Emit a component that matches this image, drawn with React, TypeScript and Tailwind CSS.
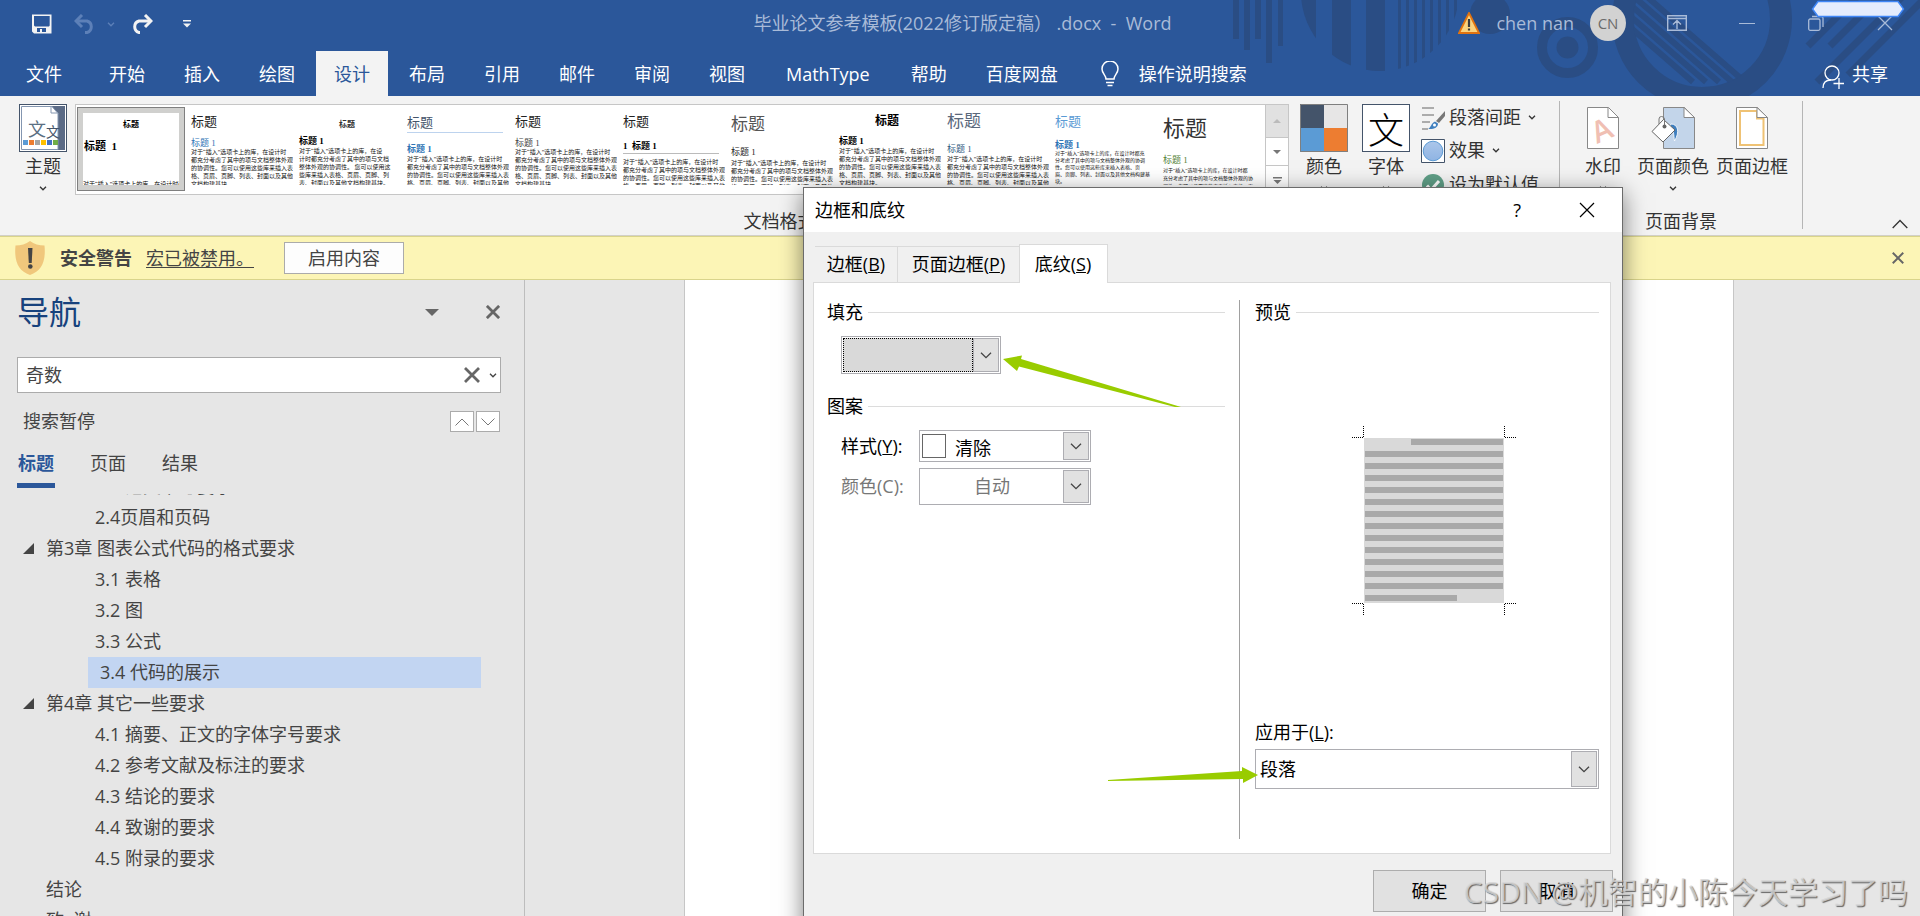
import { useState } from "react";
import type { ReactNode } from "react";

const SANS = "font-['Open_Sans','Noto_Sans_CJK_SC',sans-serif]";
const SERIF = "font-['Liberation_Serif','Noto_Sans_CJK_SC',serif]";

function Chevron({ className = "" }: { className?: string }) {
  return (
    <svg viewBox="0 0 8 5" className={`h-[5px] w-2 ${className}`} fill="none" stroke="currentColor" strokeWidth="1.3">
      <path d="M1 .8 4 3.8 7 .8" />
    </svg>
  );
}

function Cross({ className = "", width = 1.2 }: { className?: string; width?: number }) {
  return (
    <svg viewBox="0 0 16 16" className={className} fill="none" stroke="currentColor" strokeWidth={width}>
      <path d="M1 1 15 15M15 1 1 15" />
    </svg>
  );
}

function TitleDecor() {
  const thin = [1398, 1406, 1414, 1422, 1430, 1438, 1446, 1454];
  return (
    <svg viewBox="1200 0 720 96" className="pointer-events-none absolute top-0 right-0 h-24 w-[720px]" fill="#2a4d84">
      <defs>
        <clipPath id="bigDisc">
          <circle cx="1380" cy="-8" r="79" />
        </clipPath>
        <clipPath id="ringHole">
          <circle cx="1702" cy="19" r="69" />
        </clipPath>
      </defs>
      <rect x="1233" y="0" width="6" height="39" />
      <rect x="1244" y="0" width="6" height="50" />
      <rect x="1255" y="0" width="6" height="39" />
      <rect x="1266" y="0" width="6" height="63" />
      <rect x="1278" y="0" width="5" height="46" />
      <g clipPath="url(#bigDisc)">
        <rect x="1300" y="0" width="16" height="80" />
        <rect x="1332" y="0" width="19" height="80" />
        <rect x="1366" y="0" width="19" height="80" />
        {thin.map((x) => (
          <rect key={x} x={x} y="0" width="3" height="80" />
        ))}
      </g>
      <circle cx="1490" cy="14" r="20" />
      <circle cx="1567.5" cy="47.5" r="25.5" fill="none" stroke="#2a4d84" strokeWidth="10" />
      <circle cx="1567.5" cy="47.5" r="11" />
      <circle cx="1702" cy="19" r="79" fill="none" stroke="#2a4d84" strokeWidth="22" />
      <g clipPath="url(#ringHole)" stroke="#2a4d84" strokeWidth="6">
        <path d="M1645 -5 1745 82M1632 -5 1732 82M1619 -5 1719 82M1606 -5 1706 82M1593 -5 1693 82" />
      </g>
      <path
        d="M1808 46 1858 -4M1830 46 1880 -4M1817 82 1903 -4M1848 75 1925 -2"
        fill="none"
        stroke="#2a4d84"
        strokeWidth="7"
      />
    </svg>
  );
}

function TitleBar() {
  return (
    <div className="relative flex h-[46px] items-center text-[18px] text-[#a9bbd8]">
      <div className="flex flex-1 items-center pt-0.5 pl-8 text-[#f3f3f3]">
        <button aria-label="保存" className="h-5 w-5">
          <svg viewBox="0 0 20 20" className="h-5 w-5" fill="currentColor">
            <path fillRule="evenodd" d="M0 .5h19.5v19H2L0 17.500zM2 2v9.500l1 1h14l.7-1V2zM5 14v4h3v-3h2v3h4v-4z" />
          </svg>
        </button>
        <button aria-label="撤消" className="ml-[22px] text-[#5d80b8]">
          <svg viewBox="0 0 22 20" className="h-5 w-[22px]" fill="none" stroke="currentColor" strokeWidth="3">
            <path d="M2 7h11a6 6 0 0 1 0 11.500h-2" />
            <path d="M8 1 2 7 8 13" />
          </svg>
        </button>
        <Chevron className="ml-[11px] text-[#5d80b8]" />
        <button aria-label="重做" className="ml-4">
          <svg viewBox="0 0 22 20" className="h-5 w-[22px]" fill="none" stroke="currentColor" strokeWidth="3">
            <path d="M20 7H8a6 6 0 0 0 0 11.500h1" />
            <path d="M14 1 20 7 14 13" />
          </svg>
        </button>
        <button aria-label="自定义快速访问工具栏" className="ml-[30px]">
          <svg viewBox="0 0 8 8" className="h-2 w-2" fill="currentColor">
            <path d="M0 0h8v1.500H0zM0 3.500h8L4 7.500z" />
          </svg>
        </button>
      </div>
      <h1 className="whitespace-pre">毕业论文参考模板(2022修订版定稿） .docx  -  Word</h1>
      <div className="flex flex-1 items-center justify-end pr-[27px]">
        <svg viewBox="0 0 22 22" className="h-[22px] w-[22px]">
          <path d="M11 1 21 21H1z" fill="#fbd37d" stroke="#e2730f" strokeWidth="1.800" />
          <path d="M11 7v8M11 16.500v2" stroke="#3c3c3c" strokeWidth="2.200" />
        </svg>
        <span className="ml-4">chen nan</span>
        <span className="ml-4 flex h-9 w-9 items-center justify-center rounded-full bg-[#d2d2d2] text-[15px] text-[#6b6b6b]">
          CN
        </span>
        <button aria-label="功能区显示选项" className="ml-[41px]">
          <svg viewBox="0 0 20 16" className="h-4 w-5" fill="none" stroke="currentColor" strokeWidth="1.400">
            <path d="M.7.700h18.600v14.600H.7zM.7 3.500h18.600M10 14V6M6 9.500l4-4 4 4" />
          </svg>
        </button>
        <button aria-label="最小化" className="ml-[52px] h-4 w-4">
          <span className="block h-px w-4 bg-[#a9bbd8]" />
        </button>
        <button aria-label="还原" className="ml-[53px]">
          <svg viewBox="0 0 16 16" className="h-4 w-4" fill="none" stroke="currentColor" strokeWidth="1.300">
            <rect x=".7" y="4" width="11.300" height="11.300" rx="1.500" />
            <path d="M4 1.500h9.500q1.500 0 1.500 1.500v9" />
          </svg>
        </button>
        <button aria-label="关闭" className="ml-[53px]">
          <Cross className="h-4 w-4" width={1.3} />
        </button>
      </div>
      <svg viewBox="0 0 94 18" className="absolute top-0 right-[15px] h-[18px] w-[94px]">
        <path d="M7 1.500h80L92.500 9 87 16.500H7L1.500 9z" fill="#e4ecfd" stroke="#3f86f7" strokeWidth="1.500" />
      </svg>
    </div>
  );
}

const tabs = ["开始", "插入", "绘图", "设计", "布局", "引用", "邮件", "审阅", "视图", "MathType", "帮助", "百度网盘"];

function tabClass(name: string) {
  if (name === "设计") return "bg-[#f3f3f3] px-[18px] text-[#2b579a]";
  if (name === "MathType") return "px-5";
  return "px-[18px]";
}

function RibbonTabs() {
  return (
    <div className="relative mt-[5px] flex h-[45px] text-[18px] leading-[44px] text-white">
      <button className="ml-2 px-[18px]">文件</button>
      <nav className="ml-[11px] flex gap-[3px]">
        {tabs.map((t) => (
          <button key={t} className={tabClass(t)}>
            {t}
          </button>
        ))}
      </nav>
      <button className="ml-[25px] flex items-center gap-5">
        <svg viewBox="0 0 18 26" className="h-[26px] w-[18px]" fill="none" stroke="currentColor" strokeWidth="1.500">
          <path d="M5 18c0-4-4-5.500-4-10a8 8 0 0 1 16 0c0 4.500-4 6-4 10zM5 21.500h8M6.500 24.500h5" />
        </svg>
        操作说明搜索
      </button>
      <button className="ml-auto flex items-center gap-2 pr-8">
        <svg viewBox="0 0 22 26" className="mt-1.5 h-[26px] w-[22px]" fill="none" stroke="currentColor" strokeWidth="1.300">
          <circle cx="10" cy="9" r="7" />
          <path d="M1 24c0-5 3-8 8-8M17 14v11M11.500 19.500h10.500" />
        </svg>
        共享
      </button>
    </div>
  );
}

const bodyLines = [
  "对于“插入”选项卡上的库，在设计时",
  "都充分考虑了其中的项与文档整体外观",
  "的协调性。您可以使用这些库来插入表",
  "格、页眉、页脚、列表、封面以及其他",
  "文档构建基块。",
];
const wideLines = [
  "对于“插入”选项卡上的库，在设",
  "计时都充分考虑了其中的项与文档",
  "整体外观的协调性。 您可以使用这",
  "些库来插入表格、页眉、页脚、列",
  "表、封面以及其他文档构建基块。",
];
const smallLines = [
  "对于“插入”选项卡上的库，在设计时都充",
  "分考虑了其中的项与文档整体外观的协调",
  "性。您可以使用这些库来插入表格、页",
  "眉、页脚、列表、封面以及其他文档构建基",
  "块。",
];
const casualLines = ["对于“插入”选项卡上的库，在设计时都", "充分考虑了其中的项与文档整体外观的协", "调性。您可以使用这些库来插入表格、页"];

type StyleSet = { name: string; title: string; heading: string; headingText?: string; body: string; lines: string[] };

const styleSets: StyleSet[] = [
  { name: "基本", title: "text-[13px] leading-[18px] text-[#222]", heading: "mt-[7px] text-[#2e74b5]", body: "text-[6px] leading-[8px]", lines: bodyLines },
  { name: "居中", title: "w-24 text-center text-[8px] font-bold leading-[24px]", heading: "-mt-px font-bold text-black", body: "mt-px text-[6px] leading-[8px]", lines: wideLines },
  { name: "线条", title: "w-24 border-b border-[#bdd3ee] text-[13px] leading-[19px] text-[#44546a]", heading: "mt-[11px] font-bold text-[#2e74b5]", body: "mt-px text-[6px] leading-[8px]", lines: bodyLines },
  { name: "黑白", title: "text-[13px] leading-[18px] text-[#222]", heading: "mt-[7px] text-[#444]", body: "text-[6px] leading-[8px]", lines: bodyLines },
  { name: "编号", title: "text-[13px] leading-[18px] text-[#222]", heading: "mt-[10px] w-24 border-b border-[#bbb] pb-0.5 font-bold text-black", headingText: "1  标题 1", body: "mt-1 text-[6px] leading-[8px]", lines: bodyLines },
  { name: "极简", title: "text-[17px] leading-[24px] text-[#555]", heading: "mt-[10px] text-[#222]", body: "mt-[2px] text-[6px] leading-[8px]", lines: bodyLines },
  { name: "阴影", title: "w-24 text-center text-[12px] font-bold leading-[16px] text-black", heading: "mt-[7px] font-bold text-black", body: "mt-px text-[6px] leading-[8px]", lines: bodyLines },
  { name: "时尚", title: "text-[17px] leading-[18px] text-[#5a687c]", heading: "mt-[13px] text-[#2e5980]", body: "mt-px text-[6px] leading-[8px]", lines: bodyLines },
  { name: "蓝色", title: "text-[13px] leading-[18px] text-[#5b9bd5]", heading: "mt-[9px] font-bold text-[#2e74b5]", body: "text-[5px] leading-[7px]", lines: smallLines },
  { name: "休闲", title: "text-[22px] leading-[32px] text-[#333]", heading: "mt-[10px] text-[#538135]", body: "mt-[2px] text-[5px] leading-[8px]", lines: casualLines },
];

function Gallery() {
  return (
    <div className="flex h-[91px] border border-[#c6c6c6] bg-white">
      <button className={`mt-0.5 ml-px h-[84px] w-[108px] overflow-hidden border border-[#7f7f7f] bg-[#d0d0ce] p-[5px] text-left whitespace-pre text-black ${SERIF}`}>
        <span className="block h-[72px] w-24 overflow-hidden bg-white">
          <span className="block text-center text-[8px] leading-[24px] font-bold">标题</span>
          <span className="block pl-px text-[11px] leading-[18px] font-bold">标题  1</span>
          <span className="block pt-[25px] text-[6px] leading-[8px]">对于“插入”选项卡上的库，在设计时都</span>
        </span>
      </button>
      {styleSets.map((s) => (
        <button
          key={s.name}
          aria-label={s.name}
          className={`mt-2 h-[72px] w-[108px] overflow-hidden pl-[6px] text-left whitespace-pre ${SERIF}`}
        >
          <span className="flex h-[72px] flex-col">
            <span className={`block ${s.title}`}>标题</span>
            <span className={`block text-[9px] leading-[10px] ${s.heading}`}>{s.headingText ?? "标题 1"}</span>
            <span className={`block text-[#111] ${s.body}`}>
              {s.lines.map((l) => (
                <span key={l} className="block">
                  {l}
                </span>
              ))}
            </span>
          </span>
        </button>
      ))}
      <div className="flex w-[23px] flex-col border-l border-[#c6c6c6] text-[#777]">
        <button aria-label="上一行" className="flex h-8 items-center justify-center bg-[#e1e1e1] text-[#bbb]">
          <svg viewBox="0 0 8 4" className="h-1 w-2" fill="currentColor"><path d="M0 4h8L4 0z" /></svg>
        </button>
        <button aria-label="下一行" className="flex h-[29px] items-center justify-center border-y border-[#c6c6c6]">
          <svg viewBox="0 0 8 4" className="h-1 w-2" fill="currentColor"><path d="M0 0h8L4 4z" /></svg>
        </button>
        <button aria-label="其他" className="flex flex-1 items-center justify-center">
          <svg viewBox="0 0 9 7" className="h-[7px] w-[9px]" fill="currentColor"><path d="M0 0h9v1.500H0zM.5 3h8l-4 4z" /></svg>
        </button>
      </div>
    </div>
  );
}

function BigButton({ label, icon, arrow = false }: { label: string; icon: ReactNode; arrow?: boolean }) {
  return (
    <button className="flex flex-col items-center whitespace-nowrap">
      {icon}
      <span className="mt-[3px] leading-[22px]">{label}</span>
      {arrow && <Chevron className="mt-[9px]" />}
    </button>
  );
}

function Group({ label, children, className = "" }: { label: string; children: ReactNode; className?: string }) {
  return (
    <section className="flex h-32 shrink-0 flex-col justify-between border-r border-[#b5b5b5]">
      <div className={`flex items-start ${className}`}>{children}</div>
      <div className="text-center leading-[16px]">{label}</div>
    </section>
  );
}

function Ribbon() {
  return (
    <div className="flex border-b border-[#d2d0c8] bg-[#f3f3f3] pt-[5px] pb-[6px] text-[18px] text-[#333]">
      <Group label="文档格式" className="pr-5 pl-[19px]">
        <div className="flex gap-2 pt-[3px]">
          <BigButton
            label="主题"
            arrow
            icon={
              <svg viewBox="0 0 48 48" className="h-12 w-12">
                <rect x=".5" y=".5" width="47" height="47" fill="#fff" stroke="#44546a" />
                <path d="M32 2h14v44H39V9z" fill="#5b6b86" />
                <path d="M2.500 2.500H33l6 7v36H2.500z" fill="#fff" stroke="#8496b0" />
                <path d="M32 2.500V9h7" fill="none" stroke="#8496b0" />
                <text x="9" y="32" fontSize="18" fill="#5b7083" fontFamily="Noto Sans CJK SC">文</text>
                <text x="27" y="33" fontSize="14" fill="#44546a" fontFamily="Noto Sans CJK SC">文</text>
                <path d="M4 36h5v5H4z" fill="#5b9bd5" />
                <path d="M10 36h5v5h-5z" fill="#ed7d31" />
                <path d="M16 36h5v5h-5z" fill="#a5a5a5" />
                <path d="M22 36h5v5h-5z" fill="#ffc000" />
                <path d="M28 36h5v5h-5z" fill="#4472c4" />
                <path d="M34 36h5v5h-5z" fill="#70ad47" />
              </svg>
            }
          />
          <Gallery />
        </div>
        <div className="ml-[11px] flex gap-[14px] pt-[3px]">
          <BigButton
            label="颜色"
            arrow
            icon={
              <svg viewBox="0 0 48 48" className="h-12 w-12">
                <path d="M0 0h24v24H0z" fill="#44546a" />
                <path d="M24 0h24v24H24z" fill="#e7e6e6" />
                <path d="M0 24h24v24H0z" fill="#5b9bd5" />
                <path d="M24 24h24v24H24z" fill="#ed7d31" />
                <path d="M.5.500h47v47H.5z" fill="none" stroke="#7f7f7f" />
              </svg>
            }
          />
          <BigButton
            label="字体"
            arrow
            icon={
              <span className="flex h-12 w-12 items-center justify-center border border-[#44546a] bg-white font-['Noto_Sans_CJK_SC',sans-serif] text-[36px] leading-[46px] font-light text-black">
                文
              </span>
            }
          />
        </div>
        <div className="ml-[11px] flex flex-col">
          <button className="flex h-[33px] items-center">
            <svg viewBox="0 0 24 24" className="h-6 w-6">
              <path d="M1 2h12M1 9h12M1 16h8M1 23h6" stroke="#666" strokeWidth="1.200" />
              <path d="M24 5v5l-6 7-3-2z" fill="#777" />
              <path d="M14 15.500l3 2c0 4-4 6-10 5.500 3-1 3-6 7-7.500z" fill="#3f7fbf" />
              <circle cx="13.500" cy="19" r="1.500" fill="#fff" />
            </svg>
            <span className="ml-1">段落间距</span>
            <Chevron className="ml-[7px]" />
          </button>
          <button className="flex h-[33px] items-center">
            <svg viewBox="0 0 24 24" className="h-6 w-6">
              <defs>
                <linearGradient id="orb" x1="0" y1="0" x2="0" y2="1">
                  <stop offset="0" stopColor="#abc6ea" />
                  <stop offset="1" stopColor="#8fb4e3" />
                </linearGradient>
              </defs>
              <path d="M.5.500h23v23H.5z" fill="#fff" stroke="#44546a" />
              <circle cx="12" cy="12" r="9.800" fill="url(#orb)" stroke="#5b9bd5" />
            </svg>
            <span className="ml-1">效果</span>
            <Chevron className="ml-[7px]" />
          </button>
          <button className="flex h-[35px] items-center">
            <svg viewBox="0 0 24 24" className="h-6 w-6">
              <circle cx="12" cy="12" r="11" fill="#5f9e86" />
              <path d="M6 12.500l4 4.500 8-9" fill="none" stroke="#fff" strokeWidth="3" />
            </svg>
            <span className="ml-1">设为默认值</span>
          </button>
        </div>
      </Group>
      <Group label="页面背景" className="pr-[14px] pl-[25px]">
        <div className="flex gap-x-[7px] pt-[6px]">
          <div className="mr-[9px]">
            <BigButton
              label="水印"
              arrow
              icon={
                <svg viewBox="0 0 32 42" className="mb-[3px] h-[42px] w-8">
                  <path d="M.5.500h21l10 10v31H.5z" fill="#fff" stroke="#888" />
                  <path d="M21 .5v10h10.500" fill="none" stroke="#888" />
                  <text
                    x="0"
                    y="0"
                    transform="translate(10 37) rotate(-24)"
                    fontSize="30"
                    fontWeight="600"
                    fontFamily="Open Sans"
                    fill="#f0bfb3"
                  >
                    A
                  </text>
                </svg>
              }
            />
          </div>
          <BigButton
            label="页面颜色"
            arrow
            icon={
              <svg viewBox="0 0 44 42" className="mb-[3px] h-[42px] w-11">
                <path d="M12.500.5h21l10 10v31h-31z" fill="#c3d5ea" stroke="#888" />
                <path d="M33 .5v10h10.500z" fill="#fff" stroke="#888" />
                <path d="M20 17c7 0 9 8 3.500 17-1-7 0-10-5-14z" fill="#3f7fbf" stroke="#fff" strokeWidth=".8" />
                <path d="M12.500 12.500 24 23 12 35 1 24.500z" fill="#fff" stroke="#666" />
                <path d="M8 17v-5q0-2.500 2.500-2.500T13.500 12v7" fill="none" stroke="#777" />
                <circle cx="13.500" cy="19.500" r="2" fill="#666" />
              </svg>
            }
          />
          <BigButton
            label="页面边框"
            icon={
              <svg viewBox="0 0 32 42" className="mb-[3px] h-[42px] w-8">
                <path d="M.5.500h21l10 10v31H.5z" fill="#fff" stroke="#888" />
                <path d="M4 4h17v7.500h6.500V38H4z" fill="none" stroke="#efc274" strokeWidth="2" />
                <path d="M21 .5v10h10.500z" fill="#fff" stroke="#888" />
              </svg>
            }
          />
        </div>
      </Group>
      <button aria-label="折叠功能区" className="mr-3 ml-auto self-end">
        <svg viewBox="0 0 16 10" className="h-[10px] w-4" fill="none" stroke="currentColor" strokeWidth="1.300">
          <path d="M.7 9 8 1.500 15.300 9" />
        </svg>
      </button>
    </div>
  );
}

function SecurityBar() {
  return (
    <div className="flex h-11 items-center border-y border-[#d9d48b] bg-[#fcf5b6] text-[18px] text-[#444]">
      <svg viewBox="0 0 30 34" className="ml-[15px] h-[34px] w-[30px]">
        <path d="M15 0c4 3 9 4.500 14.500 4.500C31 20 27 30 15 34 3 30-1 20 .5 4.500 6 4.500 11 3 15 0z" fill="#f0c77c" />
        <path d="M13 7h4.500l-.8 15h-2.900z" fill="#444" />
        <circle cx="15.300" cy="25.500" r="2.300" fill="#444" />
      </svg>
      <strong className="ml-[15px]">安全警告</strong>
      <a href="#macros" className="ml-[14px] underline underline-offset-2">
        宏已被禁用。
      </a>
      <button className="ml-[30px] h-8 w-[120px] border border-[#ababab] bg-[#fdfdfd] leading-[28px]">启用内容</button>
      <button aria-label="关闭消息栏" className="mr-4 ml-auto text-[#666]">
        <Cross className="h-3 w-3" width={2.6} />
      </button>
    </div>
  );
}

type Heading = { text: string; level: 1 | 2; open?: boolean; current?: boolean };

const headings: Heading[] = [
  { text: "2.3 范文书写要求", level: 2 },
  { text: "2.4页眉和页码", level: 2 },
  { text: "第3章 图表公式代码的格式要求", level: 1, open: true },
  { text: "3.1 表格", level: 2 },
  { text: "3.2 图", level: 2 },
  { text: "3.3 公式", level: 2 },
  { text: "3.4 代码的展示", level: 2, current: true },
  { text: "第4章 其它一些要求", level: 1, open: true },
  { text: "4.1 摘要、正文的字体字号要求", level: 2 },
  { text: "4.2 参考文献及标注的要求", level: 2 },
  { text: "4.3 结论的要求", level: 2 },
  { text: "4.4 致谢的要求", level: 2 },
  { text: "4.5 附录的要求", level: 2 },
  { text: "结论", level: 1 },
  { text: "致  谢", level: 1 },
];

function HeadingRow({ h }: { h: Heading }) {
  if (h.current)
    return (
      <li className="mr-[43px] ml-[88px] h-[31px] bg-[#c2d5f2] pl-3">
        <a href="#section">{h.text}</a>
      </li>
    );
  if (h.level === 2)
    return (
      <li className="h-[31px] pl-[95px]">
        <a href="#section">{h.text}</a>
      </li>
    );
  return (
    <li className="flex h-[31px] items-center pl-[23px]">
      <svg viewBox="0 0 11 11" className="h-[11px] w-[11px]" fill="#444">
        {h.open && <path d="M11 0v11H0z" />}
      </svg>
      <a href="#section" className="ml-3 whitespace-pre">
        {h.text}
      </a>
    </li>
  );
}

function NavigationPane() {
  const [query, setQuery] = useState("奇数");
  return (
    <aside className="flex w-[525px] shrink-0 flex-col border-r border-[#bdbdbd] pt-3 text-[18px] text-[#444]">
      <div className="flex h-10 items-center pr-6 pl-[17px] text-[#666]">
        <h2 className="text-[32px] leading-10 text-[#17427d]">导航</h2>
        <button aria-label="任务窗格选项" className="ml-auto">
          <svg viewBox="0 0 14 7" className="h-[7px] w-[14px]" fill="currentColor"><path d="M0 0h14L7 7z" /></svg>
        </button>
        <button aria-label="关闭导航" className="ml-[47px]">
          <Cross className="h-[14px] w-[14px]" width={3.2} />
        </button>
      </div>
      <div className="mt-[25px] mr-[23px] ml-[17px] flex h-9 items-center border border-[#ababab] bg-white pr-[3px] pl-2">
        <input
          aria-label="搜索文档"
          value={query}
          onChange={(e) => setQuery(e.target.value)}
          className="min-w-0 flex-1 bg-transparent outline-none"
        />
        <button aria-label="清除搜索" className="text-[#666]" onClick={() => setQuery("")}>
          <Cross className="h-4 w-4" width={2.8} />
        </button>
        <Chevron className="ml-[9px]" />
      </div>
      <div className="mt-[18px] flex h-[21px] items-center pr-6 pl-[23px]">
        <span className="leading-[23px]">搜索暂停</span>
        <button aria-label="上一个结果" className="ml-auto flex h-[21px] w-6 items-center justify-center border border-[#ababab] bg-white text-[#777]">
          <svg viewBox="0 0 14 8" className="h-2 w-[14px]" fill="none" stroke="currentColor"><path d="M.5 7.500 7 1l6.500 6.500" /></svg>
        </button>
        <button aria-label="下一个结果" className="ml-0.5 flex h-[21px] w-6 items-center justify-center border border-[#ababab] bg-white text-[#777]">
          <svg viewBox="0 0 14 8" className="h-2 w-[14px]" fill="none" stroke="currentColor"><path d="M.5.500 7 7 13.500.500" /></svg>
        </button>
      </div>
      <div className="mt-5 flex items-start gap-[34px] pl-[17px] leading-[22px]">
        <button className="border-b-[5px] border-[#2b579a] px-px pb-[9px] font-bold text-[#2b579a]">标题</button>
        <button className="px-px">页面</button>
        <button className="px-px">结果</button>
      </div>
      <div className="mt-[6px] min-h-0 flex-1 overflow-hidden">
        <ul className="-mt-[23px] leading-[31px]">
          {headings.map((h) => (
            <HeadingRow key={h.text} h={h} />
          ))}
        </ul>
      </div>
    </aside>
  );
}

function Combo({
  id,
  value,
  className = "",
  selectClass = "",
  swatch,
  disabled = false,
}: {
  id: string;
  value: string;
  className?: string;
  selectClass?: string;
  swatch?: ReactNode;
  disabled?: boolean;
}) {
  return (
    <div className={`relative border border-[#adadb2] bg-white ${className}`}>
      {swatch}
      <select
        id={id}
        disabled={disabled}
        className={`absolute inset-0 h-full w-full appearance-none bg-transparent outline-none ${selectClass}`}
      >
        <option>{value}</option>
      </select>
      <span className="pointer-events-none absolute inset-y-px right-px flex w-[26px] items-center justify-center border border-[#adadb2] bg-[#e1e1e1] pr-px text-[#444]">
        <svg viewBox="0 0 12 7" className="h-[7px] w-3" fill="none" stroke="currentColor" strokeWidth="1.300">
          <path d="M1 .7l5 5 5-5" />
        </svg>
      </span>
    </div>
  );
}

function Legend({ children }: { children: ReactNode }) {
  return (
    <h3 className="flex items-center gap-[5px] leading-6">
      {children}
      <span className="h-px flex-1 bg-[#dcdcdc]" />
    </h3>
  );
}

function PreviewSketch() {
  const rows = Array.from({ length: 12 }, (_, i) => 26 + i * 12);
  return (
    <svg viewBox="0 0 166 190" className="h-[190px] w-[166px]">
      <rect x="12" y="13" width="140" height="165" fill="#d9d9d9" />
      <rect x="59" y="14" width="92" height="6" fill="#a9a9a9" />
      {rows.map((y) => (
        <rect key={y} x="13" y={y} width="138" height="6" fill="#a9a9a9" />
      ))}
      <rect x="13" y="170" width="92" height="6" fill="#a9a9a9" />
      <path
        d="M11.500 1v12M0 12.500h12M152.500 1v12M153 12.500h12M11.500 179v12M0 178.500h12M152.500 179v12M153 178.500h12"
        fill="none"
        stroke="#000"
        strokeDasharray="1 1"
      />
    </svg>
  );
}

function BordersDialog() {
  return (
    <div
      role="dialog"
      aria-label="边框和底纹"
      className="absolute top-[187px] left-[803px] w-[820px] border border-[#6b6b6b] bg-[#f0f0f0] pb-10 text-[18px] text-black shadow-[0_6px_22px_rgba(0,0,0,0.5)]"
    >
      <div className="flex h-11 items-center bg-white pl-[11px]">
        <h2>边框和底纹</h2>
        <button aria-label="帮助" className="mr-[58px] ml-auto">
          ?
        </button>
        <button aria-label="关闭对话框" className="mr-[27px]">
          <Cross className="h-4 w-4" />
        </button>
      </div>
      <div className="mr-[11px] ml-[9px]">
        <div className="mt-3 flex items-end pl-0.5">
          <button className="h-9 w-[83px] border-t border-r border-[#dadada]">
            边框(<u>B</u>)
          </button>
          <button className="h-9 w-[121px] border-t border-[#dadada]">
            页面边框(<u>P</u>)
          </button>
          <button className="relative -mb-px h-[39px] w-[89px] border border-b-0 border-[#dadada] bg-white pr-px">
            底纹(<u>S</u>)
          </button>
        </div>
        <div className="flex h-[572px] border border-[#dadada] bg-white pt-[17px] pb-[14px]">
          <div className="flex-1 pr-[14px] pl-[13px]">
            <Legend>
              <label htmlFor="fill">填充</label>
            </Legend>
            <div className="mt-3 pl-[14px]">
              <Combo
                id="fill"
                value=""
                className="h-[38px] w-40"
                swatch={
                  <span className="absolute inset-y-px right-[27px] left-px border border-dotted border-black bg-[#d9d9d9]" />
                }
              />
            </div>
            <div className="mt-5">
              <Legend>图案</Legend>
            </div>
            <div className="mt-3 grid grid-cols-[78px_172px] items-center gap-y-[6px] pl-[14px]">
              <label htmlFor="pattern">
                样式(<u>Y</u>):
              </label>
              <Combo
                id="pattern"
                value="清除"
                className="h-8"
                selectClass="pt-1 pl-[35px]"
                swatch={<span className="absolute top-[3px] left-0.5 h-6 w-6 border border-[#666] bg-white" />}
              />
              <label htmlFor="tint" className="text-[#777]">
                颜色(C):
              </label>
              <Combo id="tint" value="自动" disabled className="h-[37px]" selectClass="pl-[54px] text-[#777] opacity-100" />
            </div>
          </div>
          <div className="w-px bg-[#a0a0a0]" />
          <div className="flex w-[370px] flex-col pr-[11px] pl-[15px]">
            <Legend>预览</Legend>
            <div className="mt-[101px] ml-[97px]">
              <PreviewSketch />
            </div>
            <div className="mt-[105px]">
              <label htmlFor="apply" className="block leading-6">
                应用于(<u>L</u>):
              </label>
              <Combo id="apply" value="段落" className="mt-[5px] h-10" selectClass="pl-1" />
            </div>
          </div>
        </div>
        <div className="-mr-0.5 mt-4 flex justify-end gap-[14px]">
          <button className="h-[42px] w-[113px] border border-[#adadad] bg-[#e1e1e1]">确定</button>
          <button className="h-[42px] w-[113px] border border-[#adadad] bg-[#e1e1e1]">取消</button>
        </div>
      </div>
      <svg viewBox="0 0 178 54" className="absolute top-[166px] left-[199px] h-[54px] w-[178px]" fill="#99cc00">
        <path d="M0 5 19 1.500 18 5 178 53 172 53 16 12.500 14 17z" />
      </svg>
      <svg viewBox="0 0 152 18" className="absolute top-[578px] left-[304px] h-[18px] w-[152px]" fill="#99cc00">
        <path d="M0 14 134 5V1l16 8-15 8v-4L0 15z" />
      </svg>
    </div>
  );
}

export default function App() {
  return (
    <div className={`relative flex h-screen min-w-[1850px] flex-col overflow-hidden bg-[#e6e6e6] ${SANS}`}>
      <header className="relative bg-[#2b579a]">
        <TitleDecor />
        <TitleBar />
        <RibbonTabs />
      </header>
      <Ribbon />
      <SecurityBar />
      <div className="flex min-h-0 flex-1">
        <NavigationPane />
        <main className="flex flex-1 justify-center pr-7">
          <div className="w-[1050px] border-x border-[#c6c6c6] bg-white" />
        </main>
      </div>
      <BordersDialog />
      <div className="pointer-events-none absolute right-3 bottom-1 text-[30px] leading-10 text-[#d8d8d8]/80 [text-shadow:1px_1px_1px_#666]">
        CSDN @机智的小陈今天学习了吗
      </div>
    </div>
  );
}
